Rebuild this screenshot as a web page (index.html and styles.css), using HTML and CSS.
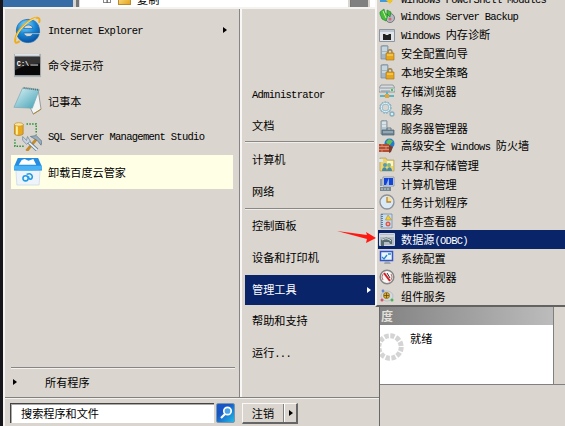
FILE: index.html
```
<!DOCTYPE html>
<html lang="zh-CN">
<head>
<meta charset="utf-8">
<title>开始菜单</title>
<link rel="stylesheet" href="styles.css">
</head>
<body>
<div class="desktop">
  <div class="taskpane"></div>
  <div class="tree-window"><span class="plus">+</span><span class="folder"></span><span class="tree-label">复制</span><span class="scrollbar"></span></div>
  <div class="progress-window">
    <div class="progress-title">度</div>
    <div class="progress-body">
      <svg class="spinner" width="26" height="28" viewBox="0 0 26 28"><circle cx="12" cy="14" r="11.2" fill="none" stroke="#d4d4d4" stroke-width="5" stroke-dasharray="4.3 1.56"/></svg>
      <span>就绪</span>
    </div>
  </div>

  <div class="start-menu">
    <div class="panes">
      <div class="programs">
        <div class="program">
          <svg class="big" viewBox="0 0 30 30"><defs><radialGradient id="ie" cx=".4" cy=".25" r=".8"><stop offset="0" stop-color="#8adcff"/><stop offset=".5" stop-color="#1989d8"/><stop offset="1" stop-color="#064a99"/></radialGradient></defs><path d="M27.500 17.500H11c1 4.500 7.500 5 9 1.500h7c-2 6-6.500 8.500-11.500 8.500C8 27.500 3.500 22 3.500 15.500 3.500 8 9 3.500 15.500 3.500c8 0 12.500 5.500 12 14zM11 13h9.500c-.5-5-8.500-5-9.500 0z" fill="url(#ie)" stroke="#126bb3" stroke-width=".8"/><path d="M7 26C3 29 1.500 28 2.500 23 4 16 15 4 23 2c5-1.200 5 2 4 5" fill="none" stroke="#f0ac18" stroke-width="2"/><path d="M3 23C5 15 16 4 24 2" fill="none" stroke="#ffe277" stroke-width=".9"/></svg>
          <span class="en">Internet Explorer</span><i class="arrow"></i>
        </div>
        <div class="program">
          <svg class="big" viewBox="0 0 30 30"><path d="M1 3h28v24H1z" fill="#aab1b5"/><path d="M2 6h26v19H2z" fill="#080808"/><path d="M2 6h26v7Q14 13 2 20z" fill="#333"/><path d="M2 4h25" stroke="#e5edf3" stroke-width="1.500"/><text x="4" y="15" class="cmd">C:\</text><path d="M18 14.500h8" stroke="#eee"/></svg>
          <span>命令提示符</span>
        </div>
        <div class="program">
          <svg class="big" viewBox="0 0 30 30"><defs><linearGradient id="np" x2="1" y2="1"><stop stop-color="#e0f5f7"/><stop offset="1" stop-color="#3f9fb4"/></linearGradient></defs><path d="M26 4l3 20-8 5-3-6z" fill="#f3f5f5" stroke="#777" stroke-width=".7"/><path d="M10 2l17 2-7 19L1 22z" fill="url(#np)" stroke="#79a7b2" stroke-width=".7"/><path d="M11 2l16 2" stroke="#517078" stroke-width="2" stroke-dasharray="1 1"/><path d="M21 29l8-5" stroke="#ad882b"/></svg>
          <span>记事本</span>
        </div>
        <div class="program">
          <svg class="big" viewBox="0 0 30 30"><path d="M14 2h10v11M2 18v7h10" fill="none" stroke="#218e31" stroke-width="1.500" stroke-dasharray="1.500 1.400"/><path d="M1.500 2.500v10c1 2 7 2 9 0v-10z" fill="#e9a91d" stroke="#9d711b" stroke-width=".6"/><path d="M4 3v10" stroke="#fff09a" stroke-width="2"/><ellipse cx="6" cy="2.500" rx="4.500" ry="1.800" fill="#ffe591" stroke="#a77717" stroke-width=".5"/><path d="M14 30l10-12" stroke="#c38b29" stroke-width="3"/><path d="M18 15l6-1 6 6-1 4-4-5z" fill="#9aaebc" stroke="#557082" stroke-width=".7"/><path d="M14 19l11 10" stroke="#667f91" stroke-width="3.500"/><path d="M14 19l11 10" stroke="#e9f1f5" stroke-width="1.800"/><path d="M10 15v4l4 4 4-3-3-5-1 4z" fill="#c7d4df" stroke="#667f91" stroke-width=".7"/></svg>
          <span class="en">SQL Server Management Studio</span>
        </div>
        <div class="program hot">
          <svg class="big" viewBox="0 0 30 30"><path d="M3 14h25l-1 15H4z" fill="#eef4fa" stroke="#c4d5e4" stroke-width=".7"/><path d="M5 1h21l4 9v4H1v-4z" fill="#258ee2"/><path d="M9 3l3-1 4 2 5-2 3 6H6z" fill="#fff"/><path d="M1 9h29v4q-15 2-29 0z" fill="#49b2f5"/><circle cx="13" cy="22" r="2.700" fill="none" stroke="#219be5" stroke-width="1.600"/><path d="M14 18q5-2 6 2c0 4-4 4-4 0" fill="none" stroke="#219be5" stroke-width="1.600"/></svg>
          <span>卸载百度云管家</span>
        </div>
        <div class="all-programs"><i class="arrow"></i><span>所有程序</span></div>
      </div>
      <div class="places">
        <div class="place user"><span class="en">Administrator</span></div>
        <div class="place">文档</div>
        <hr>
        <div class="place">计算机</div>
        <div class="place">网络</div>
        <hr class="second">
        <div class="place">控制面板</div>
        <div class="place">设备和打印机</div>
        <div class="place selected"><span>管理工具</span><i class="arrow"></i></div>
        <div class="place">帮助和支持</div>
        <div class="place">运行<span class="en">...</span></div>
      </div>
    </div>
    <div class="bottom-bar">
      <div class="search">搜索程序和文件</div>
      <div class="search-button"><svg width="18" height="18" viewBox="0 0 18 18"><circle cx="10.500" cy="7" r="3.700" fill="#4ba3e8" stroke="#fff" stroke-width="1.700"/><path d="M8 10l-4 4" stroke="#fff" stroke-width="2.200"/></svg></div>
      <div class="logoff"><span>注销</span><b><i class="arrow"></i></b></div>
    </div>
  </div>

  <div class="submenu">
    <div class="tool first"><svg viewBox="0 0 16 16"><path d="M1 2h12v11H1z" fill="#429bd9"/><path d="M7 8h7v3l-3 4-4-4z" fill="#f3c426"/></svg><span class="en">Windows PowerShell Modules</span></div>
    <div class="tool"><svg viewBox="0 0 16 16"><circle cx="11" cy="10" r="4.500" fill="#b5bac6" stroke="#777"/><path d="M1 4l4-3 1 4 3 2-2 6-4-2-2-5zM8 2l4 2-1 5-3-3z" fill="#48bd3b" stroke="#168126" stroke-width=".6"/><path d="M4 3l3 7" stroke="#cbf79a"/><circle cx="11" cy="11" r="1.500" fill="#d86b74"/></svg><span class="en">Windows Server Backup</span></div>
    <div class="tool"><svg viewBox="0 0 16 16"><path d="M.5 2.500h15v12H.5z" fill="#dfe5eb" stroke="#8c959e"/><path d="M1 4h14" stroke="#9cabbc"/><path d="M4 7h2l1 1h2l1-1h2v6H4z" fill="#222"/></svg><span><span class="en">Windows </span>内存诊断</span></div>
    <div class="tool"><svg viewBox="0 0 16 16"><path d="M2 1l5-1 2 1v13H2z" fill="#a4b5c3" stroke="#6c8090" stroke-width=".6"/><path d="M3 3h5M3 5h5M3 8h5" stroke="#e8f6fa"/><path d="M9 9V7c0-3 4-3 4 0v2" fill="none" stroke="#9d8450" stroke-width="1.400"/><path d="M7 8h8v7H7z" fill="#e4a51f" stroke="#a17012" stroke-width=".6"/><path d="M8 10h6" stroke="#ffdf79"/></svg><span>安全配置向导</span></div>
    <div class="tool"><svg viewBox="0 0 16 16"><path d="M2 1l5-1 2 1v13H2z" fill="#a4b5c3" stroke="#6c8090" stroke-width=".6"/><path d="M3 3h5M3 5h5M3 8h5" stroke="#e8f6fa"/><path d="M9 9V7c0-3 4-3 4 0v2" fill="none" stroke="#9d8450" stroke-width="1.400"/><path d="M7 8h8v7H7z" fill="#e4a51f" stroke="#a17012" stroke-width=".6"/><path d="M8 10h6" stroke="#ffdf79"/></svg><span>本地安全策略</span></div>
    <div class="tool"><svg viewBox="0 0 16 16"><path d="M2 2h12l2 3v4H0V5z" fill="#d7dce0" stroke="#777f85" stroke-width=".7"/><path d="M1 5h14M2 8h9" stroke="#8e989f"/><path d="M12 6h2v2h-2z" fill="#40c847"/><path d="M1 13h14M8 9v4" stroke="#59b5c6" stroke-width="2"/><path d="M6 11h4v4H6z" fill="#dda640"/></svg><span>存储浏览器</span></div>
    <div class="tool"><svg viewBox="0 0 16 16"><circle cx="6.500" cy="6.500" r="4.200" fill="none" stroke="#95bccd" stroke-width="2.800"/><circle cx="6.500" cy="6.500" r="5.800" fill="none" stroke="#86aabd" stroke-dasharray="1.800 1.400"/><circle cx="6.500" cy="6.500" r="4.100" fill="none" stroke="#ddf5fa"/><circle cx="13" cy="13" r="2" fill="#dcebed" stroke="#83aebf" stroke-width="1.300"/></svg><span>服务</span></div>
    <div class="tool"><svg viewBox="0 0 16 16"><path d="M2 1l4-1 2 1v13H2z" fill="#b8c7cf" stroke="#70828d" stroke-width=".7"/><path d="M3 3h4M3 6h4" stroke="#fff"/><path d="M3 10h12v5H3z" fill="#718796" stroke="#465e6e" stroke-width=".7"/><path d="M8 10V8h4v2" fill="none" stroke="#657d8b"/><path d="M4 12h10" stroke="#b6c8d2"/></svg><span>服务器管理器</span></div>
    <div class="tool"><svg viewBox="0 0 16 16"><circle cx="10.500" cy="5.500" r="5" fill="#237acb"/><path d="M7 4l3-3 4 2-4 5z" fill="#63be54"/><path d="M0 6h10v8H0z" fill="#b64d32"/><path d="M0 8.500h10M0 11.500h10M3 6v2M7 8v3M3 12v2" stroke="#e2a488" stroke-width=".7"/><path d="M10 7l4 2-2 5-2 1z" fill="#7b3b2b"/></svg><span>高级安全<span class="en"> Windows </span>防火墙</span></div>
    <div class="tool"><svg viewBox="0 0 16 16"><path d="M1 1h6l1 2h7v11H1z" fill="#edd36f" stroke="#aa9751" stroke-width=".6"/><path d="M8 4h6v5H8z" fill="#faf4d1"/><circle cx="6" cy="8" r="2" fill="#569db1"/><circle cx="10" cy="8" r="2" fill="#87b971"/><path d="M3 14c0-5 5-5 5 0M8 14c0-5 5-5 5 0" fill="#458aa0"/><path d="M0 2h4v3H0z" fill="#dce7ed"/></svg><span>共享和存储管理</span></div>
    <div class="tool"><svg viewBox="0 0 16 16"><path d="M4 1h11v9H4z" fill="#d7e2ea" stroke="#7a8797" stroke-width=".7"/><path d="M5 2h9v7H5z" fill="#1745d3"/><path d="M10 2v7H7z" fill="#91b8ff"/><path d="M2 3v7" stroke="#8d9cae" stroke-width="2"/><path d="M1 11h11v4H1z" fill="#758792"/><path d="M2 13h9" stroke="#c7d4dd" stroke-dasharray="2 1"/></svg><span>计算机管理</span></div>
    <div class="tool"><svg viewBox="0 0 16 16"><circle cx="8" cy="8" r="7" fill="#d9e9f5" stroke="#8c9297" stroke-width="1.300"/><path d="M8 8V2a6 6 0 0 1 5 6z" fill="#f7df9b"/><path d="M8 3v5h4" fill="none" stroke="#b58532" stroke-width="1.300"/></svg><span>任务计划程序</span></div>
    <div class="tool"><svg viewBox="0 0 16 16"><path d="M2 1h11v14H2z" fill="#c7dced" stroke="#6c83a0" stroke-width=".7"/><path d="M3 1v14" stroke="#557496" stroke-width="1.800" stroke-dasharray="1 1"/><path d="M9 2l3.500 5h-6z" fill="#f2cf36" stroke="#b48b26" stroke-width=".6"/><circle cx="9" cy="11" r="2.500" fill="#da5a50"/><path d="M8 11h2" stroke="#fff"/></svg><span>事件查看器</span></div>
    <div class="tool active"><svg viewBox="0 0 16 16"><path d="M.5 1.500h15v12H.5z" fill="#b5bdc4" stroke="#d1d7dc"/><path d="M1 4h14" stroke="#eef1f2"/><path d="M2 8q5-5 11 0v4h-2l-1-2H5v4H2z" fill="#586c70"/><path d="M3 8q5-3 9 1" fill="none" stroke="#e5ebe9"/></svg><span>数据源<span class="en">(ODBC)</span></span></div>
    <div class="tool"><svg viewBox="0 0 16 16"><path d="M1.500 1.500h12v9h-12z" fill="#e6f4ff" stroke="#3454ca" stroke-width="1.500"/><path d="M3 7l2 2 3-4M9 4h3" fill="none" stroke="#2786cf" stroke-width="1.300"/><path d="M6 11h4l2 3H5z" fill="#9fa7ad"/></svg><span>系统配置</span></div>
    <div class="tool"><svg viewBox="0 0 16 16"><circle cx="8" cy="8" r="6.800" fill="#f7f7f6" stroke="#858585" stroke-width="1.500"/><path d="M4 11a5 5 0 0 1 0-6M12 5a5 5 0 0 1 0 6" fill="none" stroke="#bd6868"/><path d="M5 4l6 8" stroke="#d31e24" stroke-width="2"/><path d="M8 4l3 5" stroke="#30343b"/></svg><span>性能监视器</span></div>
    <div class="tool"><svg viewBox="0 0 16 16"><ellipse cx="8" cy="8" rx="6" ry="5" fill="#d3d9df" stroke="#a2adb7" stroke-width=".6"/><circle cx="7.500" cy="7.500" r="3" fill="#e4b12c" stroke="#95731d"/><path d="M7.500 5v5M5 7.500h5" stroke="#5d4a20" stroke-width=".8"/><circle cx="4" cy="3" r="1.400" fill="#6687d4"/><circle cx="3" cy="12" r="1.500" fill="#da5269"/><circle cx="13" cy="12" r="1.500" fill="#45b35d"/></svg><span>组件服务</span></div>
  </div>
  <svg class="pointer" width="40" height="14" viewBox="0 0 40 14"><path d="M0 1l30 4-1-3 10 6-10 5 1-4z" fill="#ff1711"/></svg>
</div>
</body>
</html>
```
FILE: styles.css
```
* { box-sizing: border-box; }
body { margin: 0; }
.desktop {
  position: relative;
  width: 565px;
  height: 426px;
  overflow: hidden;
  background: #dad5ce;
  color: #000;
  font: 11.15px/16px "Noto Sans CJK SC", sans-serif;
  white-space: nowrap;
}
.en { font-family: "Liberation Mono", monospace; font-size: 10.5px; letter-spacing: -.72px; white-space: pre; }
.program > .en, .tool > .en { padding-top: 2px; }
.desktop svg { flex: none; display: block; }
.taskpane { position: absolute; left: 0; top: 0; width: 73px; height: 426px; background: #376da6; border-left: 3px solid #17171b; }
.tree-window {
  position: absolute; left: 73px; top: -8px; width: 302px; height: 16px;
  display: flex; align-items: flex-start; background: #fff;
  border-left: 3px solid #dad5ce; box-shadow: inset 3px 0 #777, inset 4px 0 #ddd;
  padding-left: 27px;
}
.plus { width: 8px; height: 11px; border: 1px solid #888; line-height: 13px; text-align: center; }
.folder { width: 13px; height: 13px; margin-left: 7px; background: linear-gradient(135deg, #ffe99a, #e5a51d); border: 1px solid #b78932; }
.tree-label { margin-left: 6px; line-height: 15px; }
.scrollbar { width: 22px; height: 16px; margin-left: auto; margin-right: 5px; background: #808080; border: solid #dad5ce; border-width: 0 2px; box-shadow: inset 1px 0 #777; }

.progress-window { position: absolute; left: 378px; top: 307px; width: 187px; height: 78px; border-bottom: 1px solid #808080; background: #dad5ce; }
.progress-title { width: 176px; height: 18px; padding-left: 3px; background: linear-gradient(90deg, #828282, #bcbcbc); color: #e4e0db; font-weight: bold; font-size: 12px; line-height: 18px; border-right: 1px solid #808080; }
.progress-body { width: 176px; height: 59px; display: flex; background: #fff; border-right: 1px solid #808080; padding-top: 5px; }
.progress-body .spinner { margin-top: 3px; }
.progress-body span { margin-left: 6px; }

.start-menu {
  position: absolute; left: 3px; top: 7px; width: 377px; height: 419px;
  display: flex; flex-direction: column;
  background: #dad5ce; border: solid #f5f3f0; border-width: 2px 1px 0 2px; border-right-color: #686868;
}
.panes { height: 389px; display: flex; border-bottom: 1px solid #808080; }
.programs { width: 235px; padding: 4px 0 0 6px; border-right: 1px solid #858585; display: flex; flex-direction: column; }
.program { width: 222px; height: 34px; margin-bottom: 1.4px; padding-left: 2px; display: flex; align-items: center; gap: 6px; }
.program .big { width: 29px; height: 29px; }
.program .arrow { margin-left: auto; margin-right: 6px; }
.hot { background: #ffffe6; }
.cmd { font: bold 7px "Liberation Mono", monospace; fill: #fff; }
.arrow { width: 0; height: 0; border: solid transparent; border-width: 3.5px 0 3.5px 4px; border-left-color: currentColor; }
.all-programs { width: 224px; height: 29px; margin-top: auto; margin-bottom: 1px; padding-left: 2px; border-top: 1px solid #868686; box-shadow: inset 0 1px #f3f1ed; display: flex; align-items: center; }
.all-programs span { margin-left: 28px; }
.places { width: 137px; padding: 70px 2px 0 3px; border-left: 2px solid #f8f7f5; }
.place { height: 31.6px; padding-left: 7px; line-height: 29px; }
.place.user { line-height: 29px; }
.places hr { height: 2px; margin: -1px 1px 2px 0; border: 0; background: linear-gradient(#8b8883 50%, #f0eeea 50%); }
.places hr.second { margin: 0 1px 1px 0; }
.selected { height: 30px; margin-bottom: 1.6px; display: flex; align-items: center; justify-content: space-between; padding-right: 4px; background: #0a246a; color: #fff; }

.bottom-bar { flex: 1; display: flex; align-items: flex-start; padding: 4px 0 0 5px; border-top: 1px solid #f3f1ed; }
.search { width: 204px; height: 20px; padding-left: 10px; line-height: 18px; background: #fff; border: solid #444; border-width: 1px 0 0 1px; box-shadow: inset 1px 1px #aaa; }
.search-button { width: 19px; height: 20px; margin-left: 2px; border: 1px solid #7595b3; border-radius: 2px; background: linear-gradient(135deg, #1855c5 35%, #21bce6); }
.logoff { display: flex; width: 56px; height: 21px; margin-left: 7px; line-height: 18px; border: 1px solid #f9f8f5; border-right: 2px solid #666; border-bottom: 2px solid #666; }
.logoff span { width: 41px; text-align: center; border-right: 1px solid #808080; }
.logoff b { flex: 1; display: flex; align-items: center; justify-content: center; border-left: 1px solid #fff; }

.submenu { position: absolute; left: 375px; top: -12px; width: 195px; height: 319px; padding-left: 1px; background: #dad5ce; border-left: 2px solid #f8f7f5; border-bottom: 2px solid #626262; }
.tool { height: 18.65px; display: flex; align-items: center; gap: 6px; padding-left: 1px; }
.tool.first > .en { padding-top: 5px; }
.tool svg { width: 16px; height: 16px; }
.active { background: #0a246a; color: #fff; }
.pointer { position: absolute; left: 337px; top: 230px; }
```
